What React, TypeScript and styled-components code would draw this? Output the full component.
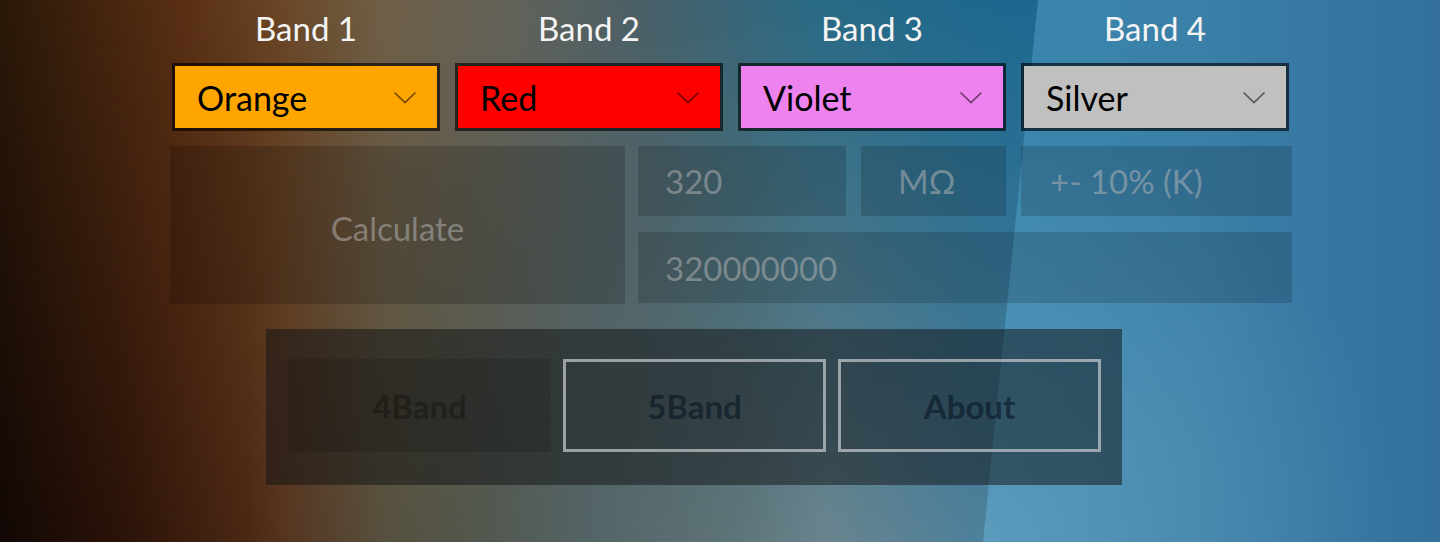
import React from "react";
import styled, { createGlobalStyle } from "styled-components";

const GlobalStyle = createGlobalStyle`
  html, body { margin: 0; padding: 0; background: #1c1008; }
  body { font-family: Lato, "Open Sans", sans-serif; }
  *, *::before, *::after { box-sizing: border-box; }
`;

const Page = styled.div`
  position: relative;
  width: 1440px;
  height: 542px;
  overflow: hidden;
  background: linear-gradient(
    to right,
    #2a1808 0px,
    #5a3015 184px,
    #6a4525 275px,
    #706048 385px,
    #62625a 514px,
    #4a6068 643px,
    #2a6a84 808px,
    #1c6890 1010px,
    #1c6890 1440px
  );

  &::before {
    content: "";
    position: absolute;
    inset: 0;
    background: linear-gradient(
      to right,
      #120805 0px,
      #2a1208 120px,
      #4a2814 248px,
      #553520 285px,
      #56503e 385px,
      #52584f 487px,
      #546466 588px,
      #5e7478 735px,
      #6a848e 826px,
      #4e809a 973px,
      #4e809a 1440px
    );
    -webkit-mask-image: linear-gradient(to bottom, transparent 0%, #000 100%);
    mask-image: linear-gradient(to bottom, transparent 0%, #000 100%);
  }

  &::after {
    content: "";
    position: absolute;
    inset: 0;
    clip-path: polygon(1038px 0, 100% 0, 100% 100%, 983px 100%);
    background:
      radial-gradient(ellipse 420px 420px at 983px 100%, rgba(255, 255, 255, 0.17), rgba(255, 255, 255, 0) 100%),
      linear-gradient(to right, #3a86ae 1000px, #3a80a8 1194px, #33709e 1440px);
  }
`;

const Content = styled.main`
  position: relative;
  z-index: 1;
  width: 1122px;
  margin-left: 170px;
  padding-top: 8px;
  display: flex;
  flex-direction: column;
`;

const BandGrid = styled.div`
  display: grid;
  grid-template-columns: repeat(4, 268px);
  column-gap: 15px;
  row-gap: 15px;
  padding: 0 2px;
`;

const BandLabel = styled.div`
  height: 40px;
  line-height: 40px;
  text-align: center;
  font-size: 33px;
  color: #f4f4f4;
`;

const Combo = styled.div<{ $fill: string }>`
  height: 68px;
  border: 3px solid rgba(0, 0, 0, 0.62);
  background: ${(p) => p.$fill};
  background-clip: padding-box;
  display: flex;
  align-items: center;
  justify-content: space-between;
  padding: 0 20px 0 22px;
  font-size: 34px;
  color: #000;
`;

const CalcRow = styled.div`
  margin-top: 15px;
  height: 158px;
  display: grid;
  grid-template-columns: 455px 1fr;
  column-gap: 13px;
`;

const CalcPanel = styled.div`
  background: rgba(0, 0, 0, 0.18);
  display: flex;
  align-items: center;
  justify-content: center;
  padding-top: 6px;
  font-size: 33px;
  color: rgba(185, 185, 185, 0.52);
`;

const Results = styled.div`
  display: grid;
  grid-template-rows: 70px 71px;
  row-gap: 16px;
`;

const ResultTop = styled.div`
  display: grid;
  grid-template-columns: 208px 145px 1fr;
  column-gap: 15px;
`;

const ValueBox = styled.div<{ $pad?: number }>`
  background: rgba(0, 0, 0, 0.16);
  display: flex;
  align-items: center;
  padding-left: ${(p) => p.$pad ?? 27}px;
  font-size: 33px;
  color: rgba(185, 185, 185, 0.5);
`;

const NavPanel = styled.nav`
  margin-top: 25px;
  margin-left: 96px;
  width: 856px;
  height: 156px;
  padding: 30px 21px 33px 22px;
  background: rgba(15, 18, 20, 0.5);
  display: grid;
  grid-template-columns: repeat(3, 263px);
  column-gap: 12px;
`;

const NavButton = styled.div<{ $selected?: boolean }>`
  display: flex;
  align-items: center;
  justify-content: center;
  font-size: 33px;
  font-weight: 700;
  border: 3px solid ${(p) => (p.$selected ? "transparent" : "rgba(195, 200, 202, 0.72)")};
  background: ${(p) => (p.$selected ? "rgba(0, 0, 0, 0.12)" : "transparent")};
  color: ${(p) => (p.$selected ? "rgba(0, 0, 0, 0.3)" : "rgba(8, 22, 36, 0.62)")};
`;

const Chevron = () => (
  <svg width="24" height="13" viewBox="0 0 24 13" fill="none">
    <polyline points="1.5,1.5 12,11.5 22.5,1.5" stroke="rgba(0,0,0,0.55)" strokeWidth="1.7" />
  </svg>
);

const bands = [
  { label: "Band 1", value: "Orange", fill: "#ffa500" },
  { label: "Band 2", value: "Red", fill: "#ff0000" },
  { label: "Band 3", value: "Violet", fill: "#ee82ee" },
  { label: "Band 4", value: "Silver", fill: "#c0c0c0" },
];

export default function App() {
  return (
    <>
      <GlobalStyle />
      <Page>
        <Content>
          <BandGrid>
            {bands.map((b) => (
              <BandLabel key={b.label}>{b.label}</BandLabel>
            ))}
            {bands.map((b) => (
              <Combo key={b.value} $fill={b.fill}>
                <span>{b.value}</span>
                <Chevron />
              </Combo>
            ))}
          </BandGrid>
          <CalcRow>
            <CalcPanel>Calculate</CalcPanel>
            <Results>
              <ResultTop>
                <ValueBox>320</ValueBox>
                <ValueBox $pad={37}>MΩ</ValueBox>
                <ValueBox $pad={29}>+- 10% (K)</ValueBox>
              </ResultTop>
              <ValueBox>320000000</ValueBox>
            </Results>
          </CalcRow>
          <NavPanel>
            <NavButton $selected>4Band</NavButton>
            <NavButton>5Band</NavButton>
            <NavButton>About</NavButton>
          </NavPanel>
        </Content>
      </Page>
    </>
  );
}
